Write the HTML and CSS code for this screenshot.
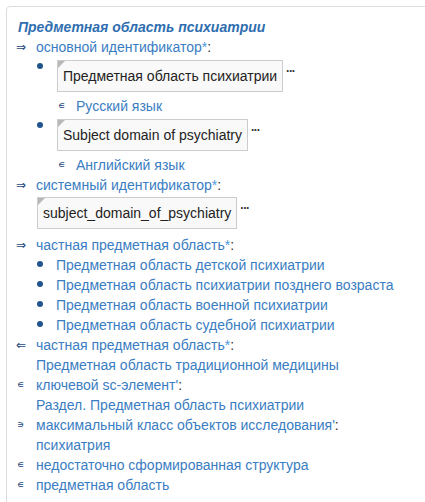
FILE: index.html
```html
<!DOCTYPE html>
<html lang="ru">
<head>
<meta charset="utf-8">
<title>Предметная область психиатрии</title>
<link rel="stylesheet" href="styles.css">
</head>
<body>
<div class="panel">
  <div class="title">Предметная область психиатрии</div>

  <div class="row">
    <span class="ic">⇒</span>
    <div class="body">
      <div class="line"><a class="link">основной идентификатор<span class="star">*</span></a><span class="colon">:</span></div>
      <div class="bitem">
        <span class="dot"></span>
        <div class="bcontent">
          <div class="boxwrap"><span class="box">Предметная область психиатрии</span><span class="more">...</span></div>
          <div class="sub"><span class="ic sm sic">∊</span><a class="link">Русский язык</a></div>
        </div>
      </div>
      <div class="bitem">
        <span class="dot"></span>
        <div class="bcontent">
          <div class="boxwrap"><span class="box">Subject domain of psychiatry</span><span class="more">...</span></div>
          <div class="sub"><span class="ic sm sic">∊</span><a class="link">Английский язык</a></div>
        </div>
      </div>
    </div>
  </div>

  <div class="row">
    <span class="ic">⇒</span>
    <div class="body">
      <div class="line"><a class="link">системный идентификатор<span class="star">*</span></a><span class="colon">:</span></div>
      <div class="boxwrap solo"><span class="box">subject_domain_of_psychiatry</span><span class="more">...</span></div>
    </div>
  </div>

  <div class="row">
    <span class="ic">⇒</span>
    <div class="body">
      <div class="line"><a class="link">частная предметная область<span class="star">*</span></a><span class="colon">:</span></div>
      <ul class="list">
        <li><a class="link">Предметная область детской психиатрии</a></li>
        <li><a class="link">Предметная область психиатрии позднего возраста</a></li>
        <li><a class="link">Предметная область военной психиатрии</a></li>
        <li><a class="link">Предметная область судебной психиатрии</a></li>
      </ul>
    </div>
  </div>

  <div class="row">
    <span class="ic">⇐</span>
    <div class="body">
      <div class="line"><a class="link">частная предметная область<span class="star">*</span></a><span class="colon">:</span></div>
      <div class="line"><a class="link">Предметная область традиционной медицины</a></div>
    </div>
  </div>

  <div class="row">
    <span class="ic sm">∊</span>
    <div class="body">
      <div class="line"><a class="link">ключевой sc-элемент'</a><span class="colon">:</span></div>
      <div class="line"><a class="link">Раздел. Предметная область психиатрии</a></div>
    </div>
  </div>

  <div class="row">
    <span class="ic sm">∍</span>
    <div class="body">
      <div class="line"><a class="link">максимальный класс объектов исследования'</a><span class="colon">:</span></div>
      <div class="line"><a class="link">психиатрия</a></div>
    </div>
  </div>

  <div class="row">
    <span class="ic sm">∊</span>
    <div class="body">
      <div class="line"><a class="link">недостаточно сформированная структура</a></div>
    </div>
  </div>

  <div class="row">
    <span class="ic sm">∊</span>
    <div class="body">
      <div class="line"><a class="link">предметная область</a></div>
    </div>
  </div>
</div>
</body>
</html>
```

FILE: styles.css
```css
html, body {
  margin: 0;
  padding: 0;
  overflow: hidden;
  background: #fff;
}

body {
  font-family: "Liberation Sans", Arial, sans-serif;
  font-size: 14px;
  line-height: 20px;
  color: #333;
}

.panel {
  margin: 6px 0 0 6px;
  width: 640px;
  min-height: 620px;
  border: 1px solid #ddd;
  border-radius: 4px;
  padding: 10px 9px;
}

.title {
  font-weight: bold;
  font-style: italic;
  font-size: 14px;
  line-height: 20px;
  color: #2f6eb0;
  padding-left: 2px;
}

.row {
  display: flex;
  align-items: flex-start;
}

.ic {
  flex: 0 0 20px;
  width: 20px;
  font-family: "DejaVu Sans", sans-serif;
  font-size: 12px;
  line-height: 20px;
  color: #23477a;
}

.ic.sm {
  font-size: 10px;
  padding-left: 1px;
  box-sizing: border-box;
}

.body {
  flex: 1;
  min-width: 0;
}

.link {
  color: #3a7dc2;
  text-decoration: none;
}

.star {
  color: #4f98de;
}

.colon {
  color: #333;
}

.bitem {
  display: flex;
  align-items: flex-start;
  margin-top: 3px;
}

.dot {
  flex: 0 0 auto;
  width: 6px;
  height: 6px;
  border-radius: 50%;
  background: #22548c;
  margin: 3px 14px 0 1px;
}

.bcontent {
  display: flex;
  flex-direction: column;
  align-items: flex-start;
}

.boxwrap {
  display: flex;
  align-items: flex-start;
}

.boxwrap.solo {
  margin: 2px 0 6px 1px;
}

.box {
  position: relative;
  display: block;
  background: #f9f9f9;
  border: 1px solid #ccc;
  padding: 5px 5px;
  color: #222;
  white-space: nowrap;
}

.box::before {
  content: "";
  position: absolute;
  top: 0;
  left: 0;
  border-top: 7px solid #b8b8b8;
  border-right: 7px solid transparent;
}

.more {
  font-size: 12px;
  line-height: 12px;
  font-weight: bold;
  color: #333;
  margin: 2px 0 0 3px;
  letter-spacing: -0.5px;
}

.sub {
  display: flex;
  margin-top: 4px;
}

.ic.sic {
  flex-basis: 19px;
  width: 19px;
}

.list {
  list-style: none;
  margin: 0;
  padding: 0;
}

.list li {
  display: flex;
  align-items: flex-start;
}

.list li::before {
  content: "";
  flex: 0 0 auto;
  width: 6px;
  height: 6px;
  border-radius: 50%;
  background: #22548c;
  margin: 6px 13px 0 1px;
}
```
